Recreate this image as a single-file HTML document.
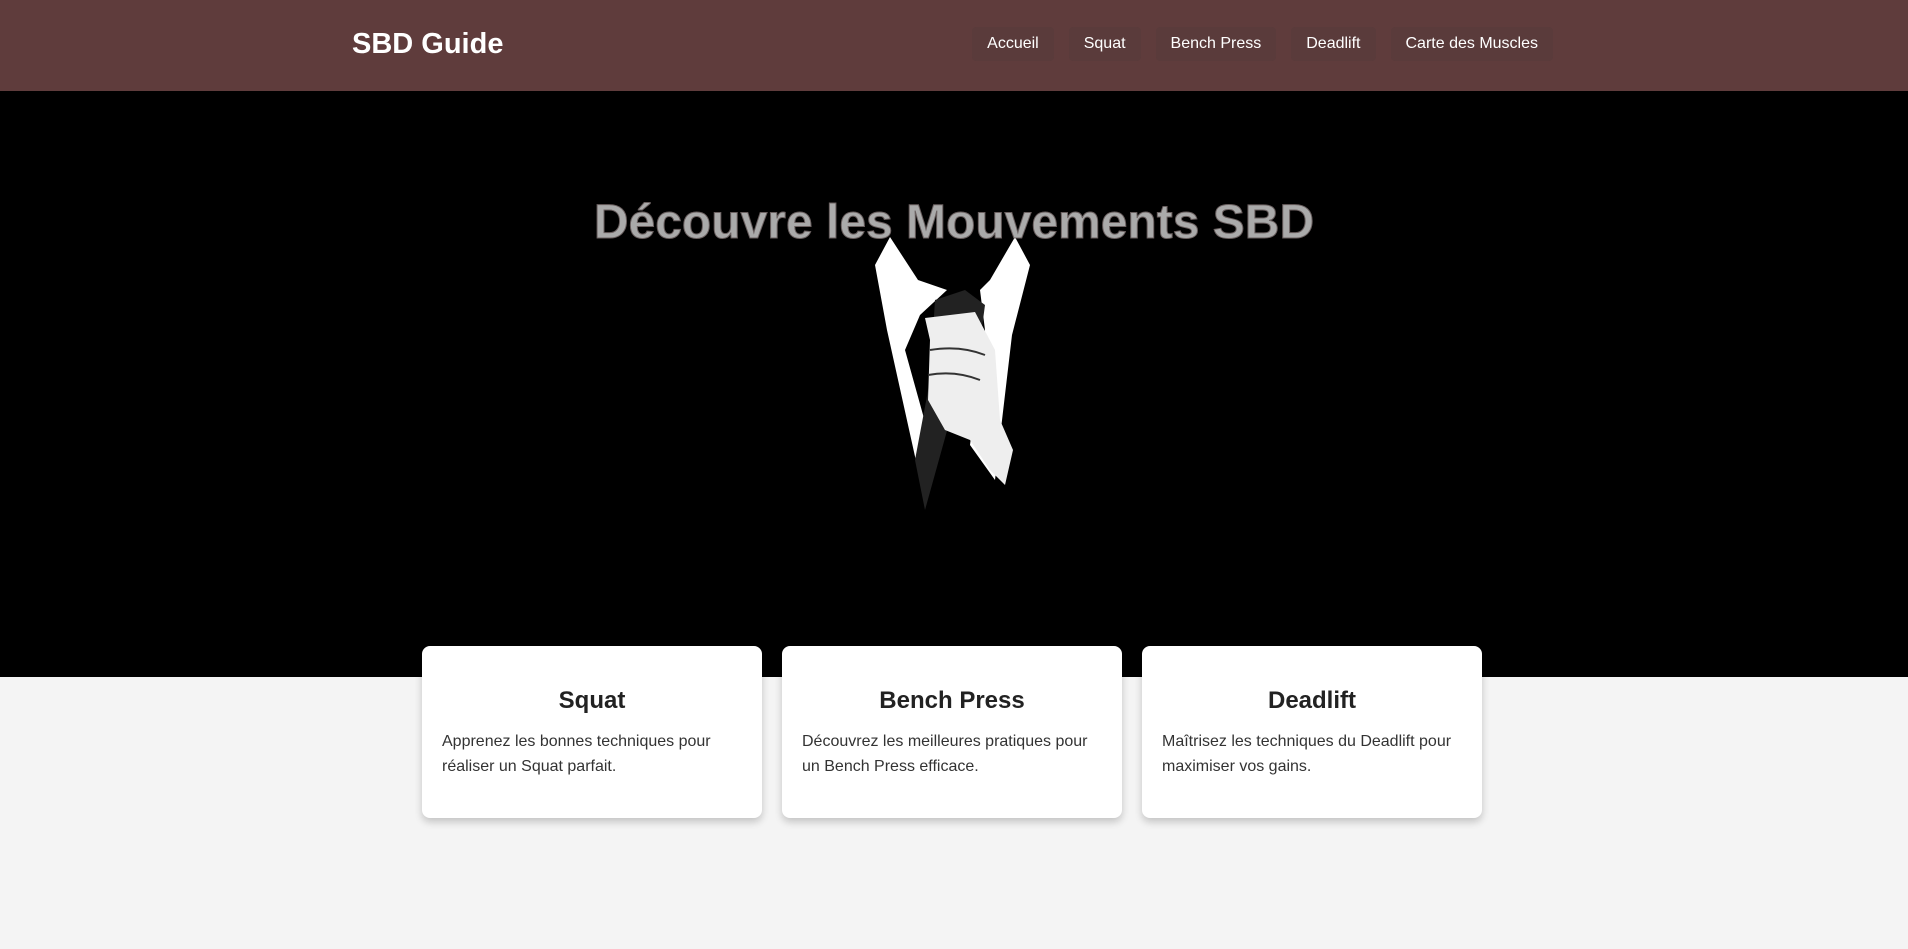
<!DOCTYPE html>
<html><head><meta charset="utf-8"><style>
*{margin:0;padding:0;box-sizing:border-box}
body{width:1908px;height:949px;background:#f4f4f4;font-family:"Liberation Sans",Arial,sans-serif;position:relative;overflow:hidden}
nav{position:absolute;left:0;top:0;width:1908px;height:91px;background:#5f3c3c}
.logo{position:absolute;left:352px;top:28px;color:#fff;font-size:29px;font-weight:bold}
.links{position:absolute;right:355px;top:27px;display:flex;gap:15px}
.links a{display:block;background:#5a3b3b;color:#fff;font-size:16px;padding:0 15px;height:34px;line-height:34px;border-radius:4px;text-decoration:none}
.hero{position:absolute;left:0;top:91px;width:1908px;height:586px;background:#000}
h1{position:absolute;left:0;width:1908px;top:195px;text-align:center;color:#aaa;font-size:48px;font-weight:bold;-webkit-text-stroke:1px #6a6060;z-index:2}
.card{position:absolute;top:646px;width:340px;height:172px;background:#fff;border-radius:8px;box-shadow:0 4px 8px rgba(0,0,0,.2);padding:0 20px}
.card h2{text-align:center;font-size:24px;color:#222;margin-top:41px}
.card p{font-size:16px;color:#333;line-height:25px;margin-top:14px}
</style></head><body>
<nav><div class="logo">SBD Guide</div>
<div class="links"><a>Accueil</a><a>Squat</a><a>Bench Press</a><a>Deadlift</a><a>Carte des Muscles</a></div></nav>
<div class="hero"></div>
<svg style="position:absolute;left:0;top:0" width="1908" height="949">
<polygon points="890,237 918,280 947,290 920,315 905,350 930,440 918,470 887,330 875,265" fill="#fff"/>
<polygon points="1015,237 1030,265 1012,335 995,480 970,445 985,330 980,290 990,280" fill="#fff"/>
<polygon points="935,300 965,290 985,305 975,380 950,420 925,510 915,460 930,380" fill="#222"/>
<path d="M925,318 L975,312 L995,350 L1000,420 L1013,450 L1005,485 L990,470 L970,440 L945,430 L928,400 L930,340 Z" fill="#eee"/>
<path d="M930,350 Q960,345 985,355 M928,375 Q955,370 980,380" stroke="#333" stroke-width="2" fill="none"/>
</svg>
<h1>Découvre les Mouvements SBD</h1>
<div class="card" style="left:422px"><h2>Squat</h2><p>Apprenez les bonnes techniques pour réaliser un Squat parfait.</p></div>
<div class="card" style="left:782px"><h2>Bench Press</h2><p>Découvrez les meilleures pratiques pour un Bench Press efficace.</p></div>
<div class="card" style="left:1142px"><h2>Deadlift</h2><p>Maîtrisez les techniques du Deadlift pour maximiser vos gains.</p></div>
</body></html>
